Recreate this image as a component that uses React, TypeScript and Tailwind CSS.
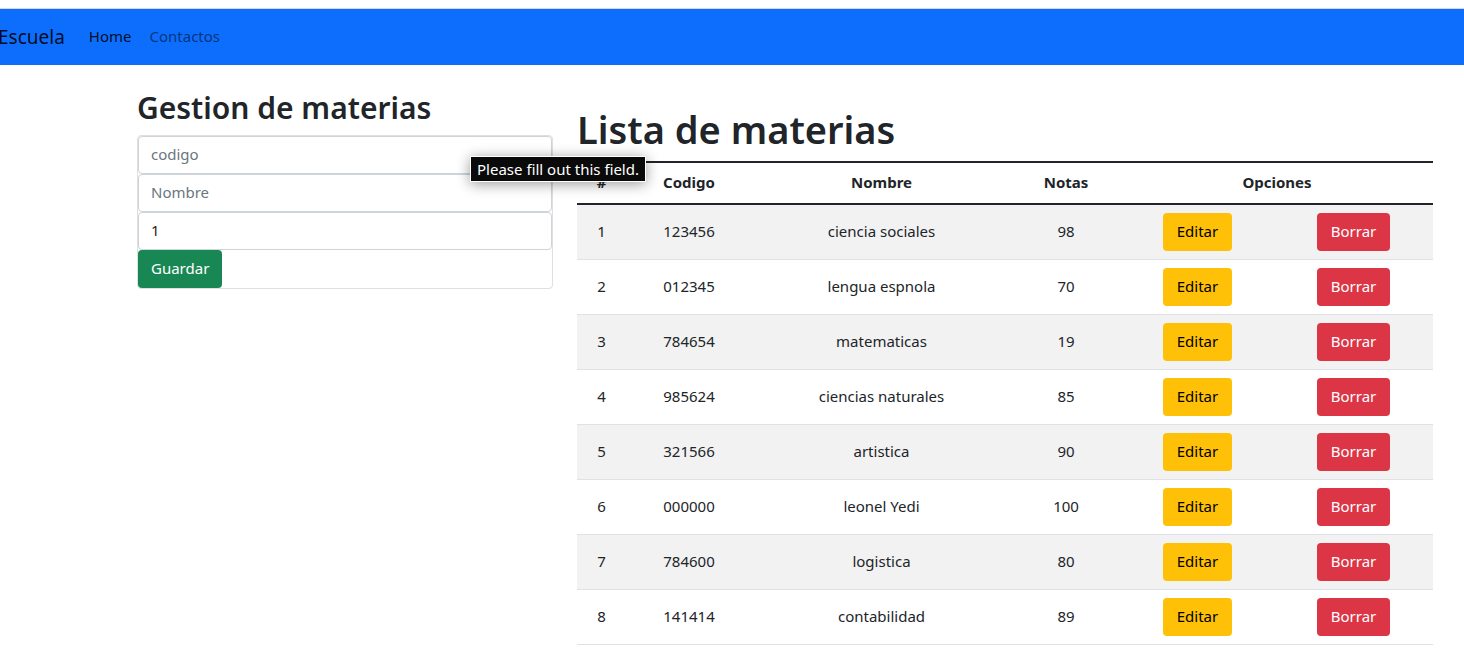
import { useState } from "react";

type Materia = {
  codigo: string;
  nombre: string;
  nota: number;
};

const materias: Materia[] = [
  { codigo: "123456", nombre: "ciencia sociales", nota: 98 },
  { codigo: "012345", nombre: "lengua espnola", nota: 70 },
  { codigo: "784654", nombre: "matematicas", nota: 19 },
  { codigo: "985624", nombre: "ciencias naturales", nota: 85 },
  { codigo: "321566", nombre: "artistica", nota: 90 },
  { codigo: "000000", nombre: "leonel Yedi", nota: 100 },
  { codigo: "784600", nombre: "logistica", nota: 80 },
  { codigo: "141414", nombre: "contabilidad", nota: 89 },
];

const control =
  "block h-[38px] w-full rounded border border-[#ced4da] bg-white px-3 pb-0.5 text-[#212529] outline-none placeholder:text-[#6c757d] placeholder:opacity-100";

const button = "block h-[38px] rounded pb-0.5 leading-6";

function Navbar() {
  return (
    <nav className="flex h-14 items-center overflow-hidden bg-[#0d6efd]">
      <a href="#" className="-ml-0.5 text-[19px] leading-[30px] text-black/90">
        Escuela
      </a>
      <ul className="ml-6 flex gap-[18px] pb-0.5 text-[15px] leading-6">
        <li>
          <a href="#" className="text-black/90">
            Home
          </a>
        </li>
        <li>
          <a href="#" className="text-black/55">
            Contactos
          </a>
        </li>
      </ul>
    </nav>
  );
}

function MateriaForm() {
  const [codigo, setCodigo] = useState("");
  const [nombre, setNombre] = useState("");
  const [nota, setNota] = useState("1");

  return (
    <form
      className="rounded border border-[#dfdfdf]"
      onSubmit={(event) => event.preventDefault()}
    >
      <div className="relative">
        <input
          aria-label="codigo"
          placeholder="codigo"
          required
          className={control}
          value={codigo}
          onChange={(event) => setCodigo(event.target.value)}
        />
        <div
          role="tooltip"
          className="absolute top-5 -right-[94px] z-10 border border-white bg-[#0a0a0a] px-1.5 text-[15px] leading-6 whitespace-nowrap text-white shadow-[0_2px_14px_rgba(0,0,0,0.4)]"
        >
          Please fill out this field.
        </div>
      </div>
      <input
        aria-label="Nombre"
        placeholder="Nombre"
        required
        className={control}
        value={nombre}
        onChange={(event) => setNombre(event.target.value)}
      />
      <input
        aria-label="Nota"
        inputMode="numeric"
        required
        className={control}
        value={nota}
        onChange={(event) => setNota(event.target.value)}
      />
      <button type="submit" className={`${button} bg-[#198754] px-[13px] text-white`}>
        Guardar
      </button>
    </form>
  );
}

function MateriaTable() {
  const head = "border-y-2 border-[#212529] px-2 pt-[7px] pb-[9px] font-bold";
  const cell = "border-b border-[#dee2e6] px-2 pt-[7px] pb-[9px]";
  const actionCell = "border-b border-[#dee2e6] p-2";

  return (
    <table className="w-full table-fixed border-separate border-spacing-0 text-center">
      <colgroup>
        <col className="w-[49px]" />
        <col className="w-[126px]" />
        <col className="w-[259px]" />
        <col className="w-[110px]" />
        <col className="w-[153px]" />
        <col className="w-[159px]" />
      </colgroup>
      <thead>
        <tr>
          <th scope="col" className={head}>#</th>
          <th scope="col" className={head}>Codigo</th>
          <th scope="col" className={head}>Nombre</th>
          <th scope="col" className={head}>Notas</th>
          <th scope="colgroup" colSpan={2} className={head}>Opciones</th>
        </tr>
      </thead>
      <tbody>
        {materias.map((materia, index) => (
          <tr key={materia.codigo} className="odd:bg-[#f2f2f2]">
            <td className={cell}>{index + 1}</td>
            <td className={cell}>{materia.codigo}</td>
            <td className={cell}>{materia.nombre}</td>
            <td className={cell}>{materia.nota}</td>
            <td className={actionCell}>
              <button type="button" className={`${button} mx-auto bg-[#ffc107] px-3.5 text-black`}>
                Editar
              </button>
            </td>
            <td className={actionCell}>
              <button type="button" className={`${button} mx-auto bg-[#dc3545] px-3.5 text-white`}>
                Borrar
              </button>
            </td>
          </tr>
        ))}
      </tbody>
    </table>
  );
}

export default function App() {
  return (
    <div className="bg-white pt-2 font-['Noto_Sans',sans-serif] text-[15px] leading-6 text-[#212529]">
      <div className="border-t border-[#d5d9dd]">
        <Navbar />
      </div>
      <main className="grid grid-cols-[416fr_856fr] items-start gap-6 pt-6 pr-[31px] pb-4 pl-[137px]">
        <section>
          <h2 className="mb-2 text-[30px] leading-[38px] font-semibold whitespace-nowrap">
            Gestion de materias
          </h2>
          <MateriaForm />
        </section>
        <section className="pt-4">
          <h1 className="mb-2 text-[38px] leading-[48px] font-semibold whitespace-nowrap">
            Lista de materias
          </h1>
          <MateriaTable />
        </section>
      </main>
    </div>
  );
}
